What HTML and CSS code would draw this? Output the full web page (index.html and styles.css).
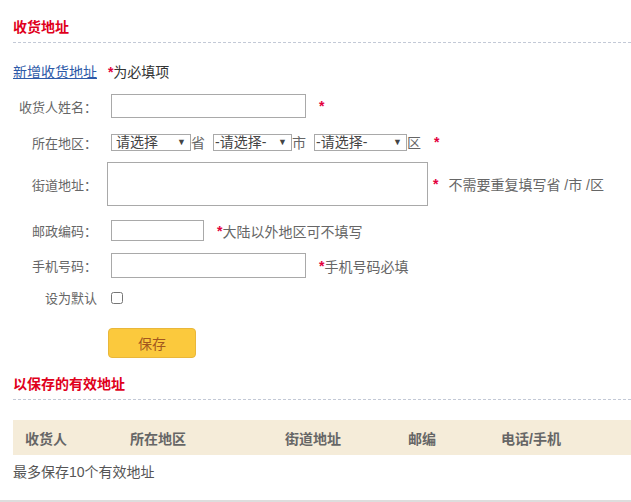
FILE: index.html
```html
<!DOCTYPE html>
<html lang="zh-CN">

<head>
  <meta charset="UTF-8" />
  <meta name="viewport" content="width=device-width, initial-scale=1.0" />
  <title>收货地址</title>
  <link rel="stylesheet" href="styles.css">
</head>

<body>
  <div class="wrap">
    <h2 class="section-title">收货地址</h2>

    <div class="add-line">
      <a href="#" class="add-link">新增收货地址</a>
      <span class="star">*</span>为必填项
    </div>

    <form class="addr-form" onsubmit="return false;">
      <div class="row row-name">
        <label class="row-label">收货人姓名：</label>
        <input type="text" class="ipt ipt-long">
        <span class="star star-gap">*</span>
      </div>

      <div class="row row-area">
        <label class="row-label">所在地区：</label>
        <span class="sel sel-prov"><select><option>请选择</option></select><i>▼</i></span>
        <span class="unit">省</span>
        <span class="sel sel-city"><select><option>-请选择-</option></select><i>▼</i></span>
        <span class="unit">市</span>
        <span class="sel sel-dist"><select><option>-请选择-</option></select><i>▼</i></span>
        <span class="unit">区</span>
        <span class="star star-gap">*</span>
      </div>

      <div class="row row-street">
        <label class="row-label">街道地址：</label>
        <textarea class="area"></textarea>
        <span class="star star-near">*</span>
        <span class="tip">不需要重复填写省 /市 /区</span>
      </div>

      <div class="row row-zip">
        <label class="row-label">邮政编码：</label>
        <input type="text" class="ipt ipt-short">
        <span class="star star-gap">*</span><span class="tip">大陆以外地区可不填写</span>
      </div>

      <div class="row row-phone">
        <label class="row-label">手机号码：</label>
        <input type="text" class="ipt ipt-long ipt-tall">
        <span class="star star-gap">*</span><span class="tip">手机号码必填</span>
      </div>

      <div class="row row-default">
        <label class="row-label">设为默认</label>
        <input type="checkbox" class="chk">
      </div>

      <div class="row row-btn">
        <button class="save-btn">保存</button>
      </div>
    </form>

    <h2 class="section-title title-saved">以保存的有效地址</h2>

    <div class="addr-head">
      <span>收货人</span>
      <span>所在地区</span>
      <span>街道地址</span>
      <span>邮编</span>
      <span>电话/手机</span>
    </div>
    <p class="note">最多保存10个有效地址</p>
  </div>
</body>

</html>
```

FILE: styles.css
```css
* {
  box-sizing: border-box;
}

body {
  margin: 0;
  font-family: "Liberation Sans", "Noto Sans CJK SC", sans-serif;
  font-size: 14px;
  color: #555;
  background: #fff;
}

.wrap {
  padding: 0 0 0 13px;
  border-bottom: 2px solid #ddd;
}

.section-title {
  margin: 0;
  padding: 17px 0 5px;
  font-size: 14px;
  line-height: 20px;
  font-weight: bold;
  color: #e0001b;
  border-bottom: 1px dashed #c3c9d6;
}

.add-line {
  margin-top: 19px;
  line-height: 20px;
  color: #333;
}

.add-link {
  color: #2d5aa8;
  text-decoration: underline;
  margin-right: 7px;
}

.star {
  color: #e3003c;
  font-weight: bold;
}

.addr-form {
  margin-top: 6px;
}

.row {
  display: flex;
  align-items: center;
  height: 36px;
  font-size: 14px;
}

.row-label {
  width: 84px;
  text-align: right;
  margin-right: 14px;
  font-size: 13px;
  color: #666;
  white-space: nowrap;
}

.row-street {
  height: 48px;
}

.row-zip {
  height: 45px;
}

.row-phone {
  height: 25px;
}

.row-default {
  height: 39px;
}

.row-btn {
  height: 51px;
}

.ipt {
  height: 24px;
  border: 1px solid #a9a9a9;
  padding: 0 4px;
  font: inherit;
  outline: none;
}

.ipt-long {
  width: 195px;
}

.ipt-short {
  width: 93px;
  height: 21px;
}

.ipt-tall {
  height: 25px;
}

.star-gap {
  margin-left: 13px;
}

.star-near {
  margin-left: 5px;
}

.tip {
  color: #666;
}

.row-street .tip {
  margin-left: 10px;
}

.sel {
  position: relative;
  display: inline-block;
  height: 17px;
}

.sel select {
  appearance: none;
  -webkit-appearance: none;
  height: 17px;
  border: 1px solid #a9a9a9;
  border-radius: 0;
  background: #fff;
  padding: 0 0 0 4px;
  font: inherit;
  font-size: 14px;
  line-height: 15px;
  color: #444;
  outline: none;
}

.sel i {
  position: absolute;
  right: 5px;
  top: 3px;
  font-style: normal;
  font-size: 9px;
  line-height: 10px;
  color: #444;
  pointer-events: none;
}

.sel-prov select {
  width: 80px;
}

.sel-city select {
  width: 79px;
  padding-left: 1px;
}

.sel-dist select {
  width: 93px;
  padding-left: 1px;
}

.sel-city,
.sel-dist {
  margin-left: 8px;
}

.unit {
  color: #666;
}

.area {
  width: 321px;
  height: 44px;
  margin-left: -4px;
  border: 1px solid #a9a9a9;
  resize: none;
  outline: none;
}

.chk {
  margin: 0;
  width: 12px;
  height: 12px;
}

.save-btn {
  margin-left: 95px;
  width: 88px;
  height: 30px;
  border: 1px solid #e9b73a;
  border-radius: 4px;
  background: #fbc93d;
  color: #a2571f;
  font: inherit;
  font-size: 14px;
  cursor: pointer;
}

.title-saved {
  padding-top: 6px;
}

.addr-head {
  display: grid;
  grid-template-columns: 105px 155px 123px 93px 1fr;
  align-items: center;
  height: 35px;
  margin-top: 20px;
  padding-left: 12px;
  background: #f5ecd9;
  font-weight: bold;
  color: #666;
}

.note {
  margin: 0;
  padding: 7px 0 18px;
  line-height: 20px;
  color: #555;
}
```
